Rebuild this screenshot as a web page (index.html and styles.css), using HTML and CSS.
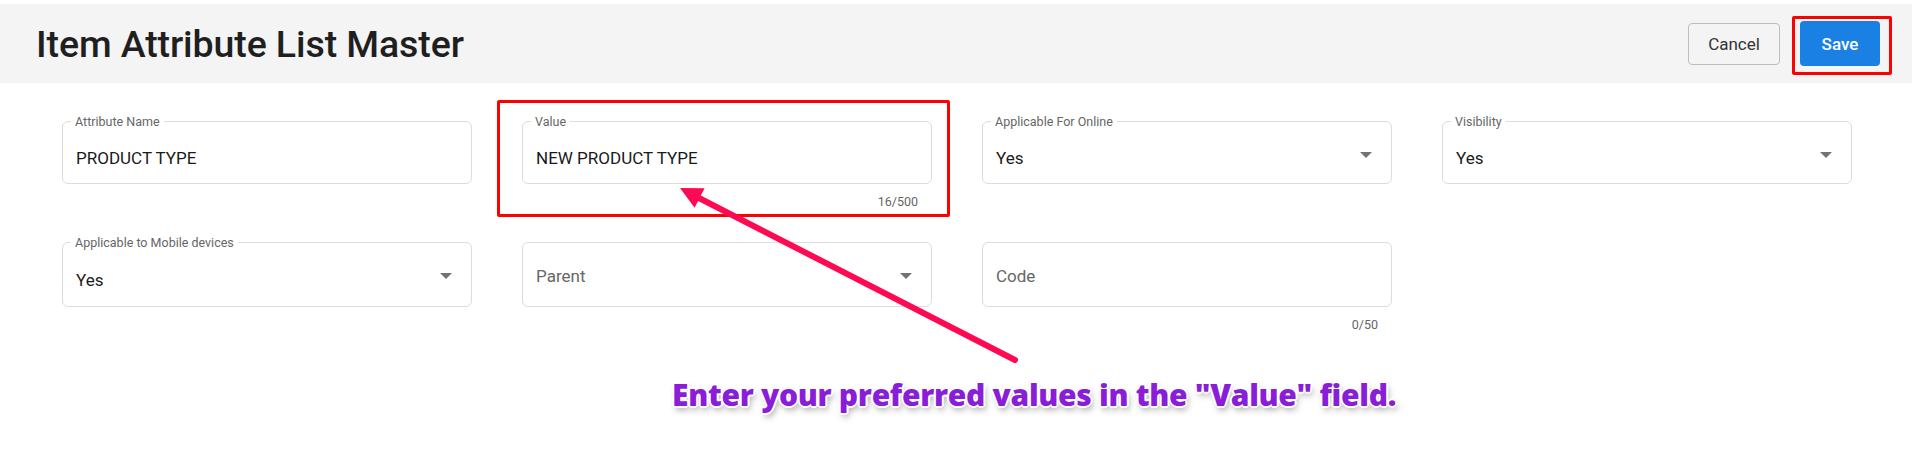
FILE: index.html
```html
<!DOCTYPE html>
<html lang="en">
<head>
  <meta charset="UTF-8" />
  <meta name="viewport" content="width=device-width, initial-scale=1.0"/>
  <title>Item Attribute List Master</title>
  <link rel="stylesheet" href="styles.css">
</head>
<body>
  <header class="page-header">
    <h1>Item Attribute List Master</h1>
    <div class="actions">
      <button class="btn btn-cancel">Cancel</button>
      <div class="save-wrap">
        <button class="btn btn-save">Save</button>
        <span class="highlight highlight-save"></span>
      </div>
    </div>
  </header>

  <main class="form-grid">
    <!-- Row 1 -->
    <div class="cell">
      <div class="field">
        <span class="field-label">Attribute Name</span>
        <span class="field-value">PRODUCT TYPE</span>
      </div>
    </div>
    <div class="cell">
      <div class="field">
        <span class="field-label">Value</span>
        <span class="field-value">NEW PRODUCT TYPE</span>
      </div>
      <div class="counter">16/500</div>
      <span class="highlight highlight-value"></span>
    </div>
    <div class="cell">
      <div class="field select">
        <span class="field-label">Applicable For Online</span>
        <span class="field-value">Yes</span>
        <span class="caret"></span>
      </div>
    </div>
    <div class="cell">
      <div class="field select">
        <span class="field-label">Visibility</span>
        <span class="field-value">Yes</span>
        <span class="caret"></span>
      </div>
    </div>

    <!-- Row 2 -->
    <div class="cell">
      <div class="field select tall">
        <span class="field-label">Applicable to Mobile devices</span>
        <span class="field-value">Yes</span>
        <span class="caret"></span>
      </div>
    </div>
    <div class="cell">
      <div class="field select tall empty">
        <span class="placeholder">Parent</span>
        <span class="caret"></span>
      </div>
    </div>
    <div class="cell">
      <div class="field tall empty">
        <span class="placeholder">Code</span>
      </div>
      <div class="counter">0/50</div>
    </div>
  </main>

  <!-- tutorial annotation -->
  <svg class="pointer" width="1912" height="457" viewBox="0 0 1912 457">
    <line x1="1015" y1="360" x2="697" y2="197" stroke="#ff0a52" stroke-width="6" stroke-linecap="round"/>
    <polygon points="680,188 704.6,188.2 694.6,207.8" fill="#ff0a52"/>
  </svg>
  <p class="callout">Enter your preferred values in the "Value" field.</p>
</body>
</html>
```

FILE: styles.css
```css
body {
  margin: 0;
  padding-top: 4px;
  font-family: Roboto, "Liberation Sans", Arial, sans-serif;
  background: #fff;
  color: #212121;
  position: relative;
  height: 453px;
  overflow: hidden;
}

.page-header {
  height: 79px;
  background: #f4f4f4;
  display: flex;
  align-items: center;
  justify-content: space-between;
  padding: 0 32px 0 36px;
}

.page-header h1 {
  margin: 0;
  font-size: 37.5px;
  font-weight: 500;
  color: #1f1f1f;
  letter-spacing: -0.1px;
}

.actions {
  display: flex;
  align-items: center;
  gap: 20px;
}

.btn {
  font-family: Roboto, "Liberation Sans", Arial, sans-serif;
  font-size: 17px;
  border-radius: 4px;
  cursor: pointer;
}

.btn-cancel {
  width: 92px;
  height: 42px;
  background: #f4f4f4;
  border: 1px solid #bdbdbd;
  color: #333;
}

.btn-save {
  width: 80px;
  height: 45px;
  background: #1b80e4;
  border: none;
  color: #fff;
  font-weight: 500;
}

.save-wrap {
  position: relative;
  display: flex;
}

.highlight {
  position: absolute;
  box-sizing: border-box;
  border: 3px solid #ff0000;
  border-radius: 2px;
  pointer-events: none;
}

.highlight-save {
  left: -8px;
  top: -5px;
  width: 100px;
  height: 59px;
}

.highlight-value {
  left: -25px;
  top: -21px;
  width: 453px;
  height: 117px;
}

.form-grid {
  display: grid;
  grid-template-columns: repeat(4, 410px);
  grid-auto-rows: 121px;
  column-gap: 50px;
  padding: 38px 0 0 62px;
}

.cell {
  position: relative;
}

.field {
  position: relative;
  box-sizing: border-box;
  height: 63px;
  border: 1px solid #dcdcdc;
  border-radius: 6px;
  padding: 10px 13px 0;
  display: flex;
  align-items: center;
}

.field.tall {
  height: 65px;
}

.field.empty {
  padding-top: 3px;
}

.field-label {
  position: absolute;
  top: -7px;
  left: 8px;
  padding: 0 4px;
  background: #fff;
  font-size: 12.5px;
  color: #666;
  line-height: 14px;
}

.field-value {
  font-size: 17px;
  color: #1a1a1a;
}

.placeholder {
  font-size: 17px;
  color: #666;
}

.caret {
  position: absolute;
  right: 19px;
  top: 50%;
  margin-top: -1px;
  width: 0;
  height: 0;
  border-left: 6px solid transparent;
  border-right: 6px solid transparent;
  border-top: 6px solid #737373;
}

.field.tall .caret {
  margin-top: -2px;
}

.counter {
  text-align: right;
  padding-right: 14px;
  margin-top: 10px;
  font-size: 12.5px;
  color: #666;
}

.pointer {
  position: absolute;
  top: 0;
  left: 0;
  pointer-events: none;
}

.callout {
  position: absolute;
  left: 672px;
  top: 374px;
  margin: 0;
  font-family: "Open Sans", Lato, sans-serif;
  font-size: 30px;
  font-weight: 800;
  color: #8a1ed8;
  letter-spacing: -0.3px;
  white-space: nowrap;
  text-shadow:
    -2px 0 0 #fff, 2px 0 0 #fff, 0 -2px 0 #fff, 0 2px 0 #fff,
    -1px -1px 0 #fff, 1px -1px 0 #fff, -1px 1px 0 #fff, 1px 1px 0 #fff,
    2px 4px 6px rgba(0, 0, 0, 0.35);
}
```
